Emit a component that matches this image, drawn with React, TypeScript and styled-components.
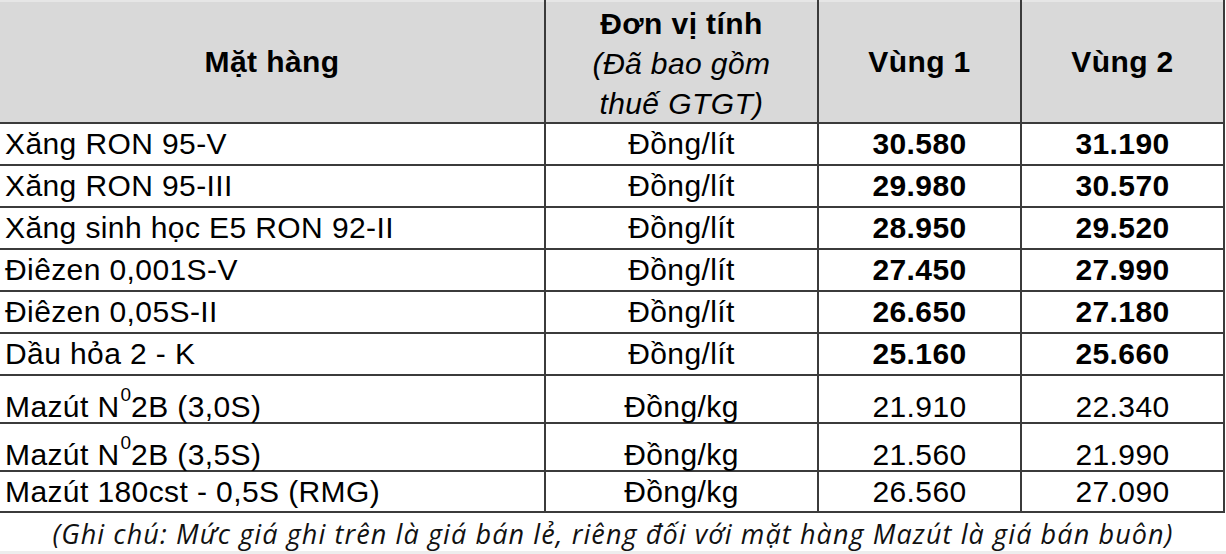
import React from 'react';
import styled, { createGlobalStyle } from 'styled-components';

const GlobalStyle = createGlobalStyle`
  html, body {
    margin: 0;
    padding: 0;
    background: #ffffff;
  }
  body {
    font-family: "Liberation Sans", Arial, sans-serif;
    color: #000;
  }
`;

const Page = styled.div`
  width: 1226px;
  height: 554px;
  background: #fff;
  overflow: hidden;
`;

const Grid = styled.div`
  display: grid;
  grid-template-columns: 544px 271px 201px 201px;
  grid-template-rows: 122px repeat(6, 40px) 46px 46px 39px;
  gap: 2px;
  padding: 0 2px 2px 0;
  width: fit-content;
  background: #3b3b3b;
`;

const Cell = styled.div<{ $left?: boolean; $bold?: boolean; $head?: boolean; $low?: boolean }>`
  display: flex;
  align-items: ${(p) => (p.$low ? 'flex-end' : 'center')};
  justify-content: ${(p) => (p.$left ? 'flex-start' : 'center')};
  padding-left: ${(p) => (p.$left ? '5px' : '0')};
  background: ${(p) => (p.$head ? '#d9d9d9' : '#ffffff')};
  border-top: ${(p) => (p.$head ? '2px solid #e6e6e6' : 'none')};
  font-size: 30px;
  letter-spacing: 0.4px;
  line-height: 30px;
  font-weight: ${(p) => (p.$bold ? 700 : 400)};
  white-space: nowrap;
`;

const Text = styled.span`
  display: inline-block;
`;

const HeadStack = styled.div`
  display: flex;
  flex-direction: column;
  align-items: center;
  line-height: 40px;
  padding-top: 3px;
`;

const HeadMain = styled.span`
  font-weight: 700;
`;

const HeadSub = styled.span`
  font-style: italic;
  font-weight: 400;
`;

const Sup = styled.span`
  font-size: 19px;
  line-height: 0;
  vertical-align: 16px;
  letter-spacing: 0;
  margin: 0 0 0 1px;
`;

const Note = styled.div`
  box-sizing: border-box;
  height: 41px;
  padding-top: 3px;
  display: flex;
  align-items: center;
  justify-content: center;
  font-family: "Open Sans", Lato, sans-serif;
  font-style: italic;
  font-size: 27px;
  letter-spacing: 1.1px;
  color: #111;
  border-bottom: 3px solid #ededed;
`;

type Item = {
  name: React.ReactNode;
  unit: string;
  v1: string;
  v2: string;
  bold: boolean;
  low?: boolean;
};

const mazut = (grade: string) => (
  <>
    Mazút N<Sup>0</Sup>2B ({grade})
  </>
);

const items: Item[] = [
  { name: 'Xăng RON 95-V', unit: 'Đồng/lít', v1: '30.580', v2: '31.190', bold: true },
  { name: 'Xăng RON 95-III', unit: 'Đồng/lít', v1: '29.980', v2: '30.570', bold: true },
  { name: 'Xăng sinh học E5 RON 92-II', unit: 'Đồng/lít', v1: '28.950', v2: '29.520', bold: true },
  { name: 'Điêzen 0,001S-V', unit: 'Đồng/lít', v1: '27.450', v2: '27.990', bold: true },
  { name: 'Điêzen 0,05S-II', unit: 'Đồng/lít', v1: '26.650', v2: '27.180', bold: true },
  { name: 'Dầu hỏa 2 - K', unit: 'Đồng/lít', v1: '25.160', v2: '25.660', bold: true },
  { name: mazut('3,0S'), unit: 'Đồng/kg', v1: '21.910', v2: '22.340', bold: false, low: true },
  { name: mazut('3,5S'), unit: 'Đồng/kg', v1: '21.560', v2: '21.990', bold: false, low: true },
  { name: 'Mazút 180cst - 0,5S (RMG)', unit: 'Đồng/kg', v1: '26.560', v2: '27.090', bold: false },
];

const App: React.FC = () => {
  return (
    <>
      <GlobalStyle />
      <Page>
        <Grid>
          <Cell $head $bold>Mặt hàng</Cell>
          <Cell $head>
            <HeadStack>
              <HeadMain>Đơn vị tính</HeadMain>
              <HeadSub>(Đã bao gồm</HeadSub>
              <HeadSub>thuế GTGT)</HeadSub>
            </HeadStack>
          </Cell>
          <Cell $head $bold>Vùng 1</Cell>
          <Cell $head $bold>Vùng 2</Cell>

          {items.map((item, i) => (
            <React.Fragment key={i}>
              <Cell $left $low={item.low}>
                <Text>{item.name}</Text>
              </Cell>
              <Cell $low={item.low}>{item.unit}</Cell>
              <Cell $bold={item.bold} $low={item.low}>{item.v1}</Cell>
              <Cell $bold={item.bold} $low={item.low}>{item.v2}</Cell>
            </React.Fragment>
          ))}
        </Grid>
        <Note>
          (Ghi chú: Mức giá ghi trên là giá bán lẻ, riêng đối với mặt hàng Mazút là giá bán buôn)
        </Note>
      </Page>
    </>
  );
};

export default App;
